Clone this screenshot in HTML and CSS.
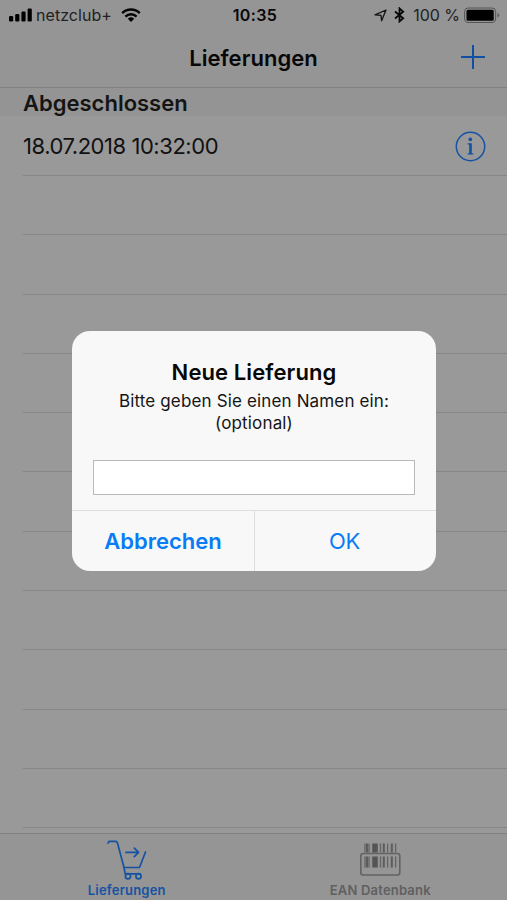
FILE: index.html
```html
<!DOCTYPE html>
<html lang="de">
<head>
<meta charset="utf-8">
<title>Lieferungen</title>
<link rel="stylesheet" href="styles.css">
</head>
<body>
<div class="screen">
  <div class="status">
    <div class="status-left">
      <svg class="signal" width="24" height="14" viewBox="0 0 24 14"><rect x="0" y="8" width="4.2" height="5.5" rx="1.2"/><rect x="6.2" y="6" width="4.2" height="7.5" rx="1.2"/><rect x="12.4" y="3.5" width="4.2" height="10" rx="1.2"/><rect x="18.6" y="0.5" width="4.2" height="13" rx="1.2"/></svg>
      <span class="carrier">netzclub+</span>
      <svg class="wifi" width="20" height="14" viewBox="0 0 20 14"><g fill="none" stroke="#050505" stroke-width="2.4"><path d="M1.2 5.1a12.6 12.6 0 0 1 17.6 0"/><path d="M4.4 8.6a8 8 0 0 1 11.2 0"/></g><path d="M6.8 10.7a4.8 4.8 0 0 1 6.4 0L10 13.9z"/></svg>
    </div>
    <span class="clock">10:35</span>
    <div class="status-right">
      <svg width="13" height="13" viewBox="0 0 13 13"><path d="M1 5.9 12 1 7.6 11.8 7 6.3z" fill="none" stroke="#151515" stroke-width="1.3" stroke-linejoin="round"/></svg>
      <svg class="bluetooth" width="11" height="16" viewBox="0 0 11 16"><path d="M1 4.5 9.2 11.2 5.5 14.4V1.4L9.2 4.8 1 11.5" fill="none" stroke="#080808" stroke-width="1.8"/></svg>
      <span class="percent">100 %</span>
      <svg class="battery" width="36" height="17" viewBox="0 0 36 17"><rect x="0.6" y="1" width="31" height="14.5" rx="3.5" fill="none" stroke="#555"/><rect x="2.5" y="2.8" width="27.2" height="10.9" rx="1.5"/><path d="M33.3 6q2 .6 2 2.2t-2 2.3z" fill="#606060"/></svg>
    </div>
  </div>
  <header class="nav">
    <h1>Lieferungen</h1>
    <svg class="add" width="24" height="24" viewBox="0 0 24 24"><path d="M12 0v24M0 12h24" stroke="#0f50a2" stroke-width="2"/></svg>
  </header>
  <main class="list">
    <h2 class="section">Abgeschlossen</h2>
    <div class="row first"><span class="date">18.07.2018 10:32:00</span>
      <svg class="info" width="31" height="31" viewBox="0 0 31 31"><circle cx="15.5" cy="15.5" r="14.2" fill="none" stroke="#1453a3" stroke-width="1.5"/><circle cx="15.3" cy="8.4" r="1.8" fill="#0f50a2"/><path d="M12.7 12.3h4.1v10h1.5v1.3h-5.6v-1.3h1.5v-8.7h-1.5z" fill="#0f50a2"/></svg>
    </div>
    <div class="row"></div><div class="row"></div><div class="row"></div><div class="row"></div><div class="row"></div><div class="row"></div><div class="row"></div><div class="row"></div><div class="row"></div><div class="row"></div><div class="row"></div>
  </main>
  <nav class="tabs">
    <div class="tab active">
      <svg width="42" height="42" viewBox="0 0 42 42"><g fill="none" stroke="#1453a3" stroke-width="1.7" stroke-linecap="round" stroke-linejoin="round"><path d="M2 4 3.2 2.3H9.5Q11 2.3 11.5 4L18 28.5 19.2 34.8H34M18 28.5H33.5L39.5 13M20 13.4H32.5M28.3 9.2 32.6 13.4 28.3 17.6"/><circle cx="22" cy="37.3" r="2.6"/><circle cx="32.5" cy="37.3" r="2.6"/></g></svg>
      <span>Lieferungen</span>
    </div>
    <div class="tab">
      <svg width="42" height="42" viewBox="0 0 42 42"><rect x="1.8" y="14.5" width="39" height="21.5" rx="2.5" fill="none" stroke="#636363" stroke-width="1.6"/><path d="M6 4.5V13.5M6 17.5V28.5M10 4.5V13.5M10 17.5V28.5M21.5 4.5V13.5M21.5 17.5V28.5M28.6 4.5V13.5M28.6 17.5V28.5M36.6 4.5V13.5M36.6 17.5V28.5" stroke="#646464" stroke-width="1.3"/><path d="M8 4.5V13.5M8 17.5V28.5M24.8 4.5V13.5M24.8 17.5V28.5M32.8 4.5V13.5M32.8 17.5V28.5" stroke="#5c5c5c" stroke-width="2"/><path d="M16 4.5V13.5M16 17.5V28.5" stroke="#545454" stroke-width="5.5"/></svg>
      <span>EAN Datenbank</span>
    </div>
  </nav>
  <div class="alert" role="dialog">
    <div class="alert-body">
      <h3>Neue Lieferung</h3>
      <p><span class="msg">Bitte geben Sie einen Namen ein:</span><br><span class="opt">(optional)</span></p>
      <input type="text" aria-label="Name">
    </div>
    <div class="actions"><button class="cancel"><span>Abbrechen</span></button><button class="ok"><span>OK</span></button></div>
  </div>
</div>
</body>
</html>
```
FILE: styles.css
```css
* { box-sizing: border-box; }
body { margin: 0; font-family: Inter, "Liberation Sans", sans-serif; color: #080808; }
h1, h2, h3, p { margin: 0; }
svg { display: block; flex: none; }
span { white-space: nowrap; }
.screen { position: relative; width: 507px; height: 900px; overflow: hidden; background: #999; display: flex; flex-direction: column; }
.status { height: 30px; flex: none; background: #959595; display: grid; grid-template-columns: 1fr auto 1fr; align-items: center; padding: 0 7px 0 9px; }
.status-left, .status-right { display: flex; align-items: center; }
.status-right { justify-content: flex-end; }
.carrier { font-size: 16px; margin-left: 3px; color: #222; letter-spacing: 0.05px; }
.wifi { margin-left: 9px; }
.clock { font-size: 16px; font-weight: 600; letter-spacing: 0.4px; padding-left: 1px; }
.bluetooth { margin-left: 7px; }
.percent { font-size: 16px; margin-left: 8px; color: #222; letter-spacing: -0.05px; }
.battery { margin-left: 4px; }
.nav { height: 58px; flex: none; background: #959595; border-bottom: 1px solid #818181; display: grid; grid-template-columns: 1fr auto 1fr; align-items: center; padding: 0 22px 1px; }
.nav h1 { grid-column: 2; font-size: 22px; font-weight: 600; line-height: 28px; letter-spacing: 0.05px; }
.add { justify-self: end; margin-bottom: 2px; }
.list { flex: 1; min-height: 0; overflow: hidden; }
.section { height: 28px; padding-left: 23px; background: #949494; font-size: 22px; line-height: 31px; font-weight: 600; color: #141414; }
.row { height: 59.3px; margin-left: 23px; padding-right: 21px; border-bottom: 1px solid #868686; display: flex; align-items: center; justify-content: space-between; }
.row.first { height: 60px; padding-top: 1px; }
.date { font-size: 22px; color: #111; letter-spacing: -0.45px; }
.tabs { height: 67px; flex: none; border-top: 1px solid #808080; background: #959595; display: grid; grid-template-columns: 1fr 1fr; }
.tab { display: flex; flex-direction: column; align-items: center; padding-top: 5px; color: #606060; font-size: 13px; font-weight: 600; line-height: 16px; letter-spacing: 0.2px; }
.tab span { margin-top: 1px; }
.tab.active { color: #1453a3; }
.alert { position: absolute; left: 72px; top: 331px; width: 364px; height: 240px; border-radius: 18px; background: #f8f8f8; overflow: hidden; display: flex; flex-direction: column; text-align: center; }
.alert-body { height: 179px; padding: 26px 21px 0; }
.alert h3 { font-size: 22px; line-height: 30px; font-weight: 600; letter-spacing: 0.1px; }
.alert p { margin-top: 3px; font-size: 17px; line-height: 22px; color: #151515; letter-spacing: 0.15px; }
.alert input { display: block; width: 322px; height: 35px; margin: 26px 0 0; padding: 0 6px; border: 1px solid #b9b9b9; border-radius: 0; background: #fff; font: 17px Inter, sans-serif; }
.actions { flex: 1; border-top: 1px solid #dedede; display: grid; grid-template-columns: 182px 1fr; }
.actions button { border: 0; padding: 0 0 1px; background: none; font: 22px Inter, sans-serif; color: #087cf5; }
.actions .cancel { font-weight: 600; }
.actions .ok { border-left: 1px solid #dedede; padding-right: 2px; letter-spacing: -0.3px; }
```
